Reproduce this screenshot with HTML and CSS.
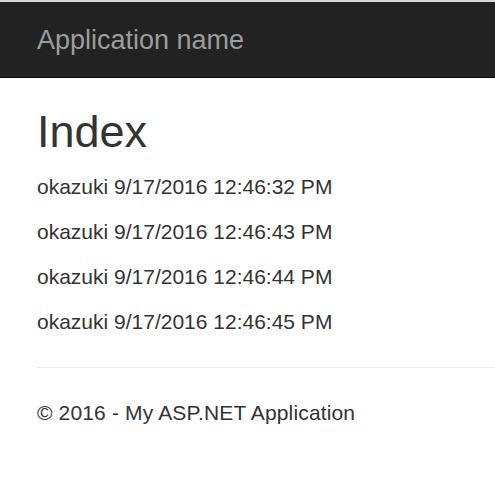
FILE: index.html
```html
<!DOCTYPE html>
<html lang="en">

<head>
    <meta charset="UTF-8">
    <meta name="viewport" content="width=device-width, initial-scale=1.0">
    <title>Index - My ASP.NET Application</title>
    <link rel="stylesheet" href="styles.css">
</head>

<body>
    <div class="navbar">
        <a class="navbar-brand" href="#">Application name</a>
    </div>
    <div class="body-content">
        <h2>Index</h2>
        <p>okazuki 9/17/2016 12:46:32 PM</p>
        <p>okazuki 9/17/2016 12:46:43 PM</p>
        <p>okazuki 9/17/2016 12:46:44 PM</p>
        <p>okazuki 9/17/2016 12:46:45 PM</p>
        <hr />
        <footer>
            <p>&copy; 2016 - My ASP.NET Application</p>
        </footer>
    </div>
</body>

</html>
```

FILE: styles.css
```css
body {
    margin: 0;
    font-family: "Liberation Sans", Arial, sans-serif;
    font-size: 21px;
    line-height: 30px;
    color: #333;
    background-color: #fff;
    border-top: 2px solid #d6d6d6;
}

.navbar {
    display: flex;
    align-items: center;
    height: 75px;
    background-color: #222;
    border-bottom: 1.5px solid #080808;
    padding-left: 37px;
}

.navbar-brand {
    font-size: 27px;
    line-height: 30px;
    color: #9d9d9d;
    text-decoration: none;
}

.body-content {
    padding-left: 37px;
}

h2 {
    margin: 29px 0 15px;
    font-size: 45px;
    font-weight: 500;
    line-height: 49.5px;
}

p {
    margin: 0 0 15px;
}

hr {
    margin: 30px 0;
    border: 0;
    border-top: 1.5px solid #eee;
}

footer p {
    letter-spacing: 0.15px;
}
```
